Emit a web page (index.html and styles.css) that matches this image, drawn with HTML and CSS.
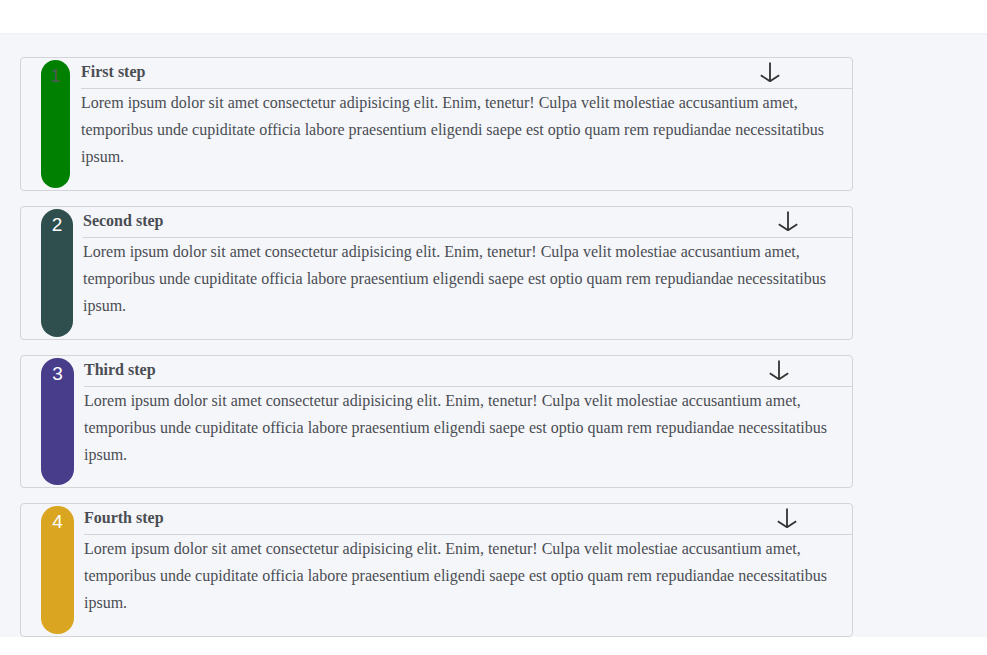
FILE: index.html
```html
<!DOCTYPE html>
<html lang="en">
<head>
<meta charset="utf-8">
<title>Steps</title>
<link rel="stylesheet" href="styles.css">
</head>
<body>
<header class="topbar"></header>
<main class="steps">
  <section class="step step-1">
    <div class="pill"><span class="num">1</span></div>
    <div class="content">
      <div class="head">
        <h3 class="title">First step</h3>
        <svg class="arrow" viewBox="0 0 20 20" width="20" height="20"><path d="M10 0.5V19M0.8 13.2L10 19.3L19.2 13.2" fill="none" stroke="#333" stroke-width="1.8"/></svg>
      </div>
      <p class="text">Lorem ipsum dolor sit amet consectetur adipisicing elit. Enim, tenetur! Culpa velit molestiae accusantium amet, temporibus unde cupiditate officia labore praesentium eligendi saepe est optio quam rem repudiandae necessitatibus ipsum.</p>
    </div>
  </section>
  <section class="step step-2">
    <div class="pill"><span class="num">2</span></div>
    <div class="content">
      <div class="head">
        <h3 class="title">Second step</h3>
        <svg class="arrow" viewBox="0 0 20 20" width="20" height="20"><path d="M10 0.5V19M0.8 13.2L10 19.3L19.2 13.2" fill="none" stroke="#333" stroke-width="1.8"/></svg>
      </div>
      <p class="text">Lorem ipsum dolor sit amet consectetur adipisicing elit. Enim, tenetur! Culpa velit molestiae accusantium amet, temporibus unde cupiditate officia labore praesentium eligendi saepe est optio quam rem repudiandae necessitatibus ipsum.</p>
    </div>
  </section>
  <section class="step step-3">
    <div class="pill"><span class="num">3</span></div>
    <div class="content">
      <div class="head">
        <h3 class="title">Third step</h3>
        <svg class="arrow" viewBox="0 0 20 20" width="20" height="20"><path d="M10 0.5V19M0.8 13.2L10 19.3L19.2 13.2" fill="none" stroke="#333" stroke-width="1.8"/></svg>
      </div>
      <p class="text">Lorem ipsum dolor sit amet consectetur adipisicing elit. Enim, tenetur! Culpa velit molestiae accusantium amet, temporibus unde cupiditate officia labore praesentium eligendi saepe est optio quam rem repudiandae necessitatibus ipsum.</p>
    </div>
  </section>
  <section class="step step-4">
    <div class="pill"><span class="num">4</span></div>
    <div class="content">
      <div class="head">
        <h3 class="title">Fourth step</h3>
        <svg class="arrow" viewBox="0 0 20 20" width="20" height="20"><path d="M10 0.5V19M0.8 13.2L10 19.3L19.2 13.2" fill="none" stroke="#333" stroke-width="1.8"/></svg>
      </div>
      <p class="text">Lorem ipsum dolor sit amet consectetur adipisicing elit. Enim, tenetur! Culpa velit molestiae accusantium amet, temporibus unde cupiditate officia labore praesentium eligendi saepe est optio quam rem repudiandae necessitatibus ipsum.</p>
    </div>
  </section>
</main>
</body>
</html>
```

FILE: styles.css
```css
* { box-sizing: border-box; }
html, body { margin: 0; padding: 0; background: #ffffff; }
body { font-family: "Liberation Serif", "Times New Roman", serif; color: #4a4d53; }

.topbar {
  height: 33px;
  background: #ffffff;
  box-shadow: 0 1px 2px rgba(0, 0, 0, 0.04);
  position: relative;
  z-index: 1;
}

.steps {
  background: #f5f6fa;
  padding: 24px 0 0 20px;
  display: flex;
  flex-direction: column;
  gap: 15px;
}

.step {
  width: 833px;
  height: 134px;
  border: 1px solid #d3d4d8;
  border-radius: 4px;
  padding: 2px 0;
  display: flex;
  gap: 10px;
  background: #f5f6fa;
}
.step-3 { height: 133px; }

.pill {
  margin-left: 20px;
  width: 32px;
  flex: none;
  border-radius: 16px;
  display: flex;
  justify-content: center;
  align-items: flex-start;
}
.step-1 .pill { width: 29px; background: #008000; border-radius: 15px; margin-right: 1px; }
.step-2 .pill { width: 32px; background: #2f4f4f; }
.step-3 .pill { width: 33px; background: #483d8b; }
.step-4 .pill { width: 33px; background: #daa520; }

.num {
  font-family: "Liberation Sans", Arial, sans-serif;
  font-size: 19px;
  line-height: 22px;
  color: #ffffff;
  margin-top: 5px;
}
.step-1 .num { color: #4f5a55; }

.content {
  flex: 1;
  display: flex;
  flex-direction: column;
}

.head {
  height: 29px;
  border-bottom: 1px solid #d3d4d8;
  display: flex;
  align-items: flex-start;
}

.title {
  margin: 0;
  font-size: 16px;
  line-height: 24px;
  font-weight: bold;
  color: #4a4d53;
}

.arrow {
  margin-left: 615px;
  margin-top: 2px;
  flex: none;
}
.step-3 .arrow, .step-4 .arrow { margin-left: 613px; }

.text {
  margin: 0;
  font-size: 16px;
  line-height: 27px;
  color: #4a4d53;
}
```
